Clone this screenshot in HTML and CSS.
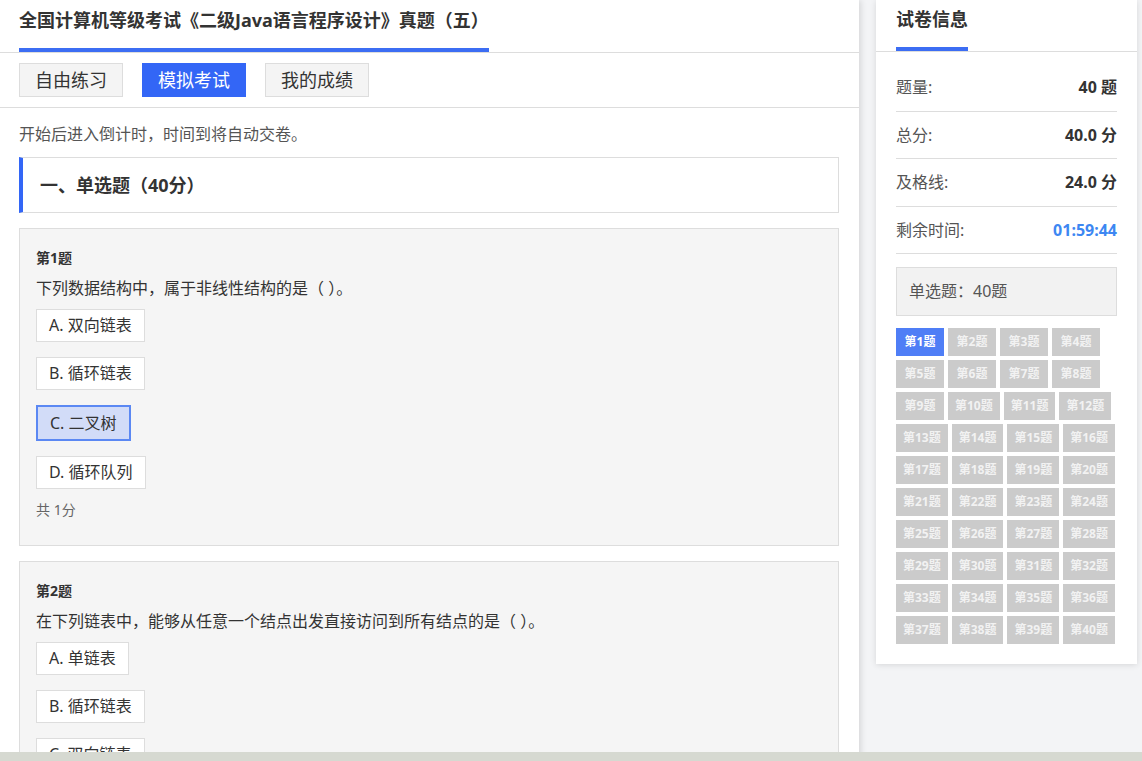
FILE: index.html
```html
<!DOCTYPE html>
<html lang="zh-CN">
<head>
    <meta charset="UTF-8">
    <meta name="viewport" content="width=device-width, initial-scale=1.0">
    <title>全国计算机等级考试《二级Java语言程序设计》真题（五）</title>
    <link rel="stylesheet" href="styles.css">
</head>
<body>
    <div class="page">
        <!-- left: paper -->
        <div class="paper">
            <div class="paper-head">
                <h1 class="paper-title">全国计算机等级考试《二级Java语言程序设计》真题（五）</h1>
            </div>

            <div class="tabs">
                <span class="tab">自由练习</span>
                <span class="tab active">模拟考试</span>
                <span class="tab">我的成绩</span>
            </div>

            <div class="paper-body">
                <p class="notice">开始后进入倒计时，时间到将自动交卷。</p>

                <div class="section-title">一、单选题（40分）</div>

                <div class="question">
                    <div class="q-no">第1题</div>
                    <div class="q-text">下列数据结构中，属于非线性结构的是（ ）。</div>
                    <div class="options">
                        <span class="option">A. 双向链表</span>
                        <span class="option">B. 循环链表</span>
                        <span class="option selected">C. 二叉树</span>
                        <span class="option">D. 循环队列</span>
                    </div>
                    <div class="q-score">共 1分</div>
                </div>

                <div class="question">
                    <div class="q-no">第2题</div>
                    <div class="q-text">在下列链表中，能够从任意一个结点出发直接访问到所有结点的是（ ）。</div>
                    <div class="options">
                        <span class="option">A. 单链表</span>
                        <span class="option">B. 循环链表</span>
                        <span class="option">C. 双向链表</span>
                        <span class="option">D. 二叉链表</span>
                    </div>
                    <div class="q-score">共 1分</div>
                </div>
            </div>
        </div>

        <!-- right: info -->
        <div class="side">
            <div class="side-head">
                <h2 class="side-title">试卷信息</h2>
            </div>
            <div class="side-body">
                <ul class="info-list">
                    <li><span class="label">题量:</span><span class="value">40 题</span></li>
                    <li><span class="label">总分:</span><span class="value">40.0 分</span></li>
                    <li><span class="label">及格线:</span><span class="value">24.0 分</span></li>
                    <li><span class="label">剩余时间:</span><span class="value time" id="timer">01:59:44</span></li>
                </ul>

                <div class="type-box">单选题：40题</div>

                <div class="num-grid" id="numGrid"></div>
            </div>
        </div>
    </div>

    <div class="bottom-bar"></div>

    <script>
        const grid = document.getElementById('numGrid');
        for (let i = 1; i <= 40; i++) {
            const btn = document.createElement('span');
            btn.className = 'num' + (i === 1 ? ' current' : '');
            btn.textContent = '第' + i + '题';
            grid.appendChild(btn);
        }
    </script>
</body>
</html>
```

FILE: styles.css
```css
* {
    margin: 0;
    padding: 0;
    box-sizing: border-box;
}

html, body {
    width: 100%;
    height: 100%;
    overflow: hidden;
}

body {
    background: #f3f4f6;
    font-family: "Noto Sans", "Noto Sans CJK SC", sans-serif;
    color: #333;
}

.page {
    display: flex;
    align-items: flex-start;
    height: 100%;
}

/* left */
.paper {
    width: 859px;
    min-height: 100%;
    background: #fff;
    box-shadow: 2px 0 6px rgba(0, 0, 0, 0.12);
}

.paper-head {
    padding: 0 19px;
    border-bottom: 1px solid #ddd;
}

.paper-title {
    display: inline-block;
    font-size: 18px;
    font-weight: bold;
    line-height: 24px;
    padding: 8px 0 16px;
    border-bottom: 4px solid #3c6df3;
    color: #333;
}

.tabs {
    display: flex;
    gap: 19px;
    padding: 10px 19px;
    border-bottom: 1px solid #ddd;
}

.tab {
    width: 104px;
    height: 34px;
    line-height: 32px;
    text-align: center;
    font-size: 18px;
    background: #f4f4f4;
    border: 1px solid #ddd;
    color: #333;
}

.tab.active {
    background: #3366f6;
    border-color: #3366f6;
    color: #fff;
}

.paper-body {
    padding: 0 20px 0 19px;
}

.notice {
    font-size: 16px;
    line-height: 22px;
    color: #555;
    padding-top: 15px;
    margin-bottom: 12px;
}

.section-title {
    height: 56px;
    line-height: 54px;
    border: 1px solid #ddd;
    border-left: 4px solid #3366f6;
    padding-left: 17px;
    font-size: 18px;
    font-weight: bold;
    color: #333;
}

.question {
    margin-top: 15px;
    background: #f5f5f5;
    border: 1px solid #ddd;
    padding: 20px 16px 25px;
}

.q-no {
    font-size: 14px;
    font-weight: bold;
    line-height: 18px;
    color: #333;
}

.q-text {
    font-size: 16px;
    line-height: 22px;
    margin-top: 10px;
    color: #333;
}

.options {
    display: flex;
    flex-direction: column;
    align-items: flex-start;
    gap: 15px;
    margin-top: 10px;
}

.option {
    display: inline-block;
    font-size: 16px;
    line-height: 21px;
    padding: 5px 12px;
    background: #fff;
    border: 1px solid #ddd;
    color: #333;
}

.option.selected {
    background: #d2dcf8;
    border: 2px solid #5b88f3;
    line-height: 22px;
    padding: 5px 12px;
}

.q-score {
    margin-top: 11px;
    font-size: 14px;
    line-height: 20px;
    color: #666;
}

/* right */
.side {
    width: 261px;
    margin-left: 17px;
    background: #fff;
    box-shadow: 0 1px 6px rgba(0, 0, 0, 0.12);
}

.side-head {
    padding: 0 20px;
    border-bottom: 1px solid #ddd;
}

.side-title {
    display: inline-block;
    font-size: 18px;
    font-weight: bold;
    line-height: 24px;
    padding: 7px 0 16px;
    border-bottom: 4px solid #3c6df3;
    color: #333;
}

.side-body {
    padding: 12px 20px 20px;
}

.info-list {
    list-style: none;
}

.info-list li {
    display: flex;
    justify-content: space-between;
    padding: 13px 0;
    line-height: 20.5px;
    border-bottom: 1px solid #ddd;
    font-size: 16px;
}

.label {
    color: #555;
}

.value {
    font-weight: bold;
    color: #333;
}

.value.time {
    color: #3d87f2;
}

.type-box {
    margin-top: 13px;
    height: 49px;
    line-height: 47px;
    padding-left: 12px;
    background: #f2f2f2;
    border: 1px solid #ddd;
    font-size: 16px;
    color: #555;
}

.num-grid {
    display: flex;
    flex-wrap: wrap;
    gap: 4px;
    margin-top: 12px;
}

.num {
    min-width: 48px;
    height: 28px;
    line-height: 28px;
    padding: 0 7px;
    text-align: center;
    font-size: 12px;
    font-weight: bold;
    background: #cbcbcb;
    color: #f2f2f2;
}

.num.current {
    background: #4f7ef6;
    color: #fff;
}

.bottom-bar {
    position: fixed;
    left: 0;
    right: 0;
    bottom: 0;
    height: 9px;
    background: #d6d9d1;
}
```
